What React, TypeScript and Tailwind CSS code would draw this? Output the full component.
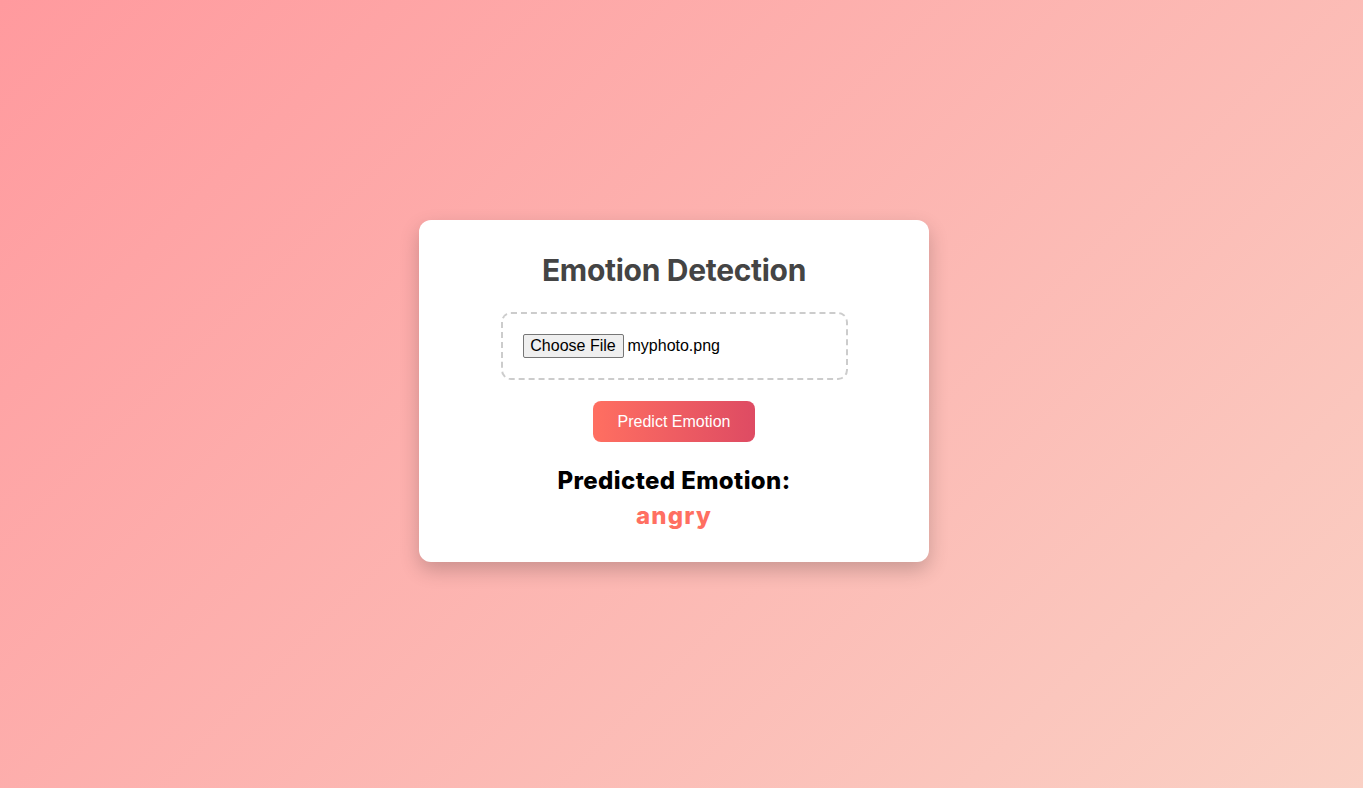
export default function App() {
  return (
    <div
      className="min-h-screen w-full flex items-center justify-center pr-[15px] pb-[6px] bg-[linear-gradient(135deg,#ff9a9e_0%,#fad0c4_100%)]"
      style={{ minHeight: 788 }}
    >
      <div className="w-[510px] bg-white rounded-[12px] shadow-[0_8px_20px_rgba(0,0,0,0.2)] px-[40px] pt-[33px] pb-[31px] flex flex-col items-center">
        <h1 className="font-['Inter',sans-serif] font-bold text-[30px] leading-[34px] text-[#444] tracking-[-0.3px]">
          Emotion Detection
        </h1>
        <div className="mt-[25px] w-[347px] h-[68px] border-2 border-dashed border-[#ccc] rounded-[10px] px-[20px] flex items-center">
          <div className="flex items-center font-['Liberation_Sans',Arial,sans-serif] text-[16px] text-black">
            <span className="h-[24px] w-[101px] bg-[#efefef] border border-[#767676] rounded-[2px] flex items-center justify-center text-[16px] leading-none">
              Choose File
            </span>
            <span className="ml-[4px]">myphoto.png</span>
          </div>
        </div>
        <button className="mt-[21px] h-[41px] w-[162px] rounded-[8px] bg-[linear-gradient(90deg,#ff6f61,#de4b63)] text-white font-['Liberation_Sans',Arial,sans-serif] text-[16px]">
          Predict Emotion
        </button>
        <h3 className="mt-[24px] font-['Inter',sans-serif] font-extrabold text-[24px] leading-[30px] text-black tracking-[0.4px]">
          Predicted Emotion:
        </h3>
        <p className="mt-[5px] font-['Inter',sans-serif] font-extrabold text-[24px] leading-[30px] text-[#ff6f61] tracking-[1.2px]">
          angry
        </p>
      </div>
    </div>
  );
}
